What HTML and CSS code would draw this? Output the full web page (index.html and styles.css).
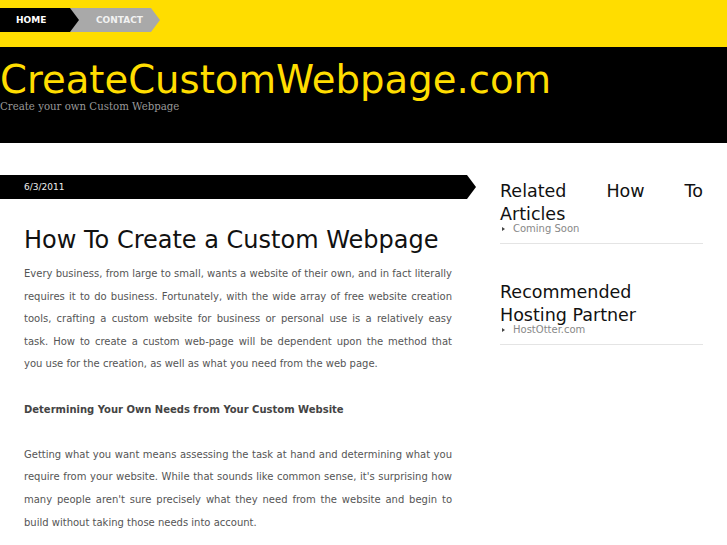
FILE: index.html
```html
<!DOCTYPE html>
<html lang="en">
  <head>
    <meta charset="UTF-8" />
    <meta name="viewport" content="width=device-width, initial-scale=1.0" />
    <title>CreateCustomWebpage.com</title>
    <link rel="stylesheet" href="styles.css">
  </head>
  <body>
    <div class="topbar">
      <ul class="nav">
        <li class="nav-home"><a href="#">Home</a></li>
        <li class="nav-contact"><a href="#">Contact</a></li>
      </ul>
    </div>
    <div class="masthead">
      <h1 class="site-title">CreateCustomWebpage.com</h1>
      <p class="tagline">Create your own Custom Webpage</p>
    </div>
    <div class="main">
      <div class="content">
        <div class="post-date">6/3/2011</div>
        <h2 class="post-title">How To Create a Custom Webpage</h2>
        <div class="post-body">
          <p>Every business, from large to small, wants a website of their own, and in fact literally requires it to do business. Fortunately, with the wide array of free website creation tools, crafting a custom website for business or personal use is a relatively easy task. How to create a custom web-page will be dependent upon the method that you&nbsp;use for the creation, as well as what you need from the web page.</p>
          <p><strong>Determining Your Own Needs from Your Custom Website</strong></p>
          <p>Getting what you want means assessing the task at hand and determining what you require from your website. While that sounds like common sense, it's surprising how many people aren't sure precisely what they need from the website and begin to build without taking those needs into account.</p>
        </div>
      </div>
      <div class="sidebar">
        <div class="widget">
          <h3>Related How To Articles</h3>
          <ul>
            <li>Coming Soon</li>
          </ul>
        </div>
        <div class="widget">
          <h3>Recommended Hosting Partner</h3>
          <ul>
            <li><a href="#">HostOtter.com</a></li>
          </ul>
        </div>
      </div>
    </div>
  </body>
</html>
```

FILE: styles.css
```css
body {
  margin: 0;
  font-family: "DejaVu Sans", sans-serif;
  background-color: #fff;
  color: #555;
}
a {
  color: inherit;
  text-decoration: none;
}
ul {
  list-style: none;
  margin: 0;
  padding: 0;
}
.topbar {
  background-color: #ffdd00;
  height: 47px;
  padding-top: 8px;
  box-sizing: border-box;
}
.nav {
  display: flex;
}
.nav li {
  height: 24px;
  line-height: 24px;
  font-size: 9px;
  font-weight: bold;
  text-transform: uppercase;
  box-sizing: border-box;
  clip-path: polygon(0 0, calc(100% - 9px) 0, 100% 50%, calc(100% - 9px) 100%, 0 100%);
}
.nav-home {
  position: relative;
  z-index: 1;
  width: 79px;
  padding-left: 16px;
  background-color: #000;
  color: #fff;
}
.nav-contact {
  width: 90px;
  margin-left: -9px;
  padding-left: 26px;
  background-color: #a9a9a9;
  color: #f2f2f2;
}
.masthead {
  background-color: #000;
  height: 96px;
  padding-top: 12px;
  box-sizing: border-box;
}
.site-title {
  margin: 0;
  font-size: 38.6px;
  font-weight: normal;
  line-height: 42px;
  color: #ffdd00;
}
.tagline {
  margin: 0;
  font-family: "DejaVu Serif", serif;
  font-size: 10.2px;
  line-height: 12px;
  color: #999;
}
.main {
  display: flex;
  padding-top: 32px;
}
.content {
  width: 476px;
  flex-shrink: 0;
}
.post-date {
  height: 24px;
  line-height: 24px;
  padding-left: 24px;
  font-size: 9px;
  color: #eee;
  background-color: #000;
  clip-path: polygon(0 0, calc(100% - 9px) 0, 100% 50%, calc(100% - 9px) 100%, 0 100%);
}
.post-title {
  margin: 27px 24px 9px;
  font-size: 24px;
  font-weight: normal;
  line-height: 28px;
  color: #111;
}
.post-body {
  padding: 0 24px;
  font-size: 10px;
  line-height: 22.6px;
  text-align: justify;
}
.post-body p {
  margin: 0 0 22.6px;
}
.post-body strong {
  color: #444;
}
.sidebar {
  width: 203px;
  margin-left: 24px;
  padding-top: 5px;
}
.widget {
  padding-bottom: 8px;
  border-bottom: 1px solid #e4e4e4;
  margin-bottom: 37px;
}
.widget h3 {
  margin: 0 0 -2px;
  font-size: 17.5px;
  font-weight: normal;
  line-height: 22.5px;
  color: #111;
  text-align: justify;
}
.widget li {
  font-size: 10px;
  line-height: 12px;
  color: #888;
}
.widget li::before {
  content: "";
  display: inline-block;
  width: 0;
  height: 0;
  border-left: 3px solid #444;
  border-top: 2.5px solid transparent;
  border-bottom: 2.5px solid transparent;
  margin: 0 8px 1px 2px;
  vertical-align: middle;
}
```
